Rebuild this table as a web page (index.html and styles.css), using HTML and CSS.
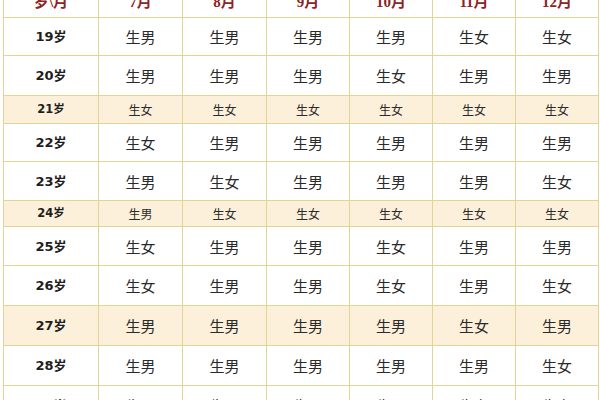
FILE: index.html
```html
<!DOCTYPE html>
<html lang="zh-CN">
<head>
<meta charset="utf-8">
<title>生男生女表</title>
<link rel="stylesheet" href="styles.css">
</head>
<body>
<table class="chart">
  <colgroup>
    <col class="c-age"><col class="c-m1"><col class="c-m1"><col class="c-m2"><col class="c-m2"><col class="c-m2"><col class="c-m2">
  </colgroup>
  <thead>
    <tr class="head"><th>岁\月</th><th>7月</th><th>8月</th><th>9月</th><th>10月</th><th>11月</th><th>12月</th></tr>
  </thead>
  <tbody>
    <tr class="r38"><td class="age">19岁</td><td>生男</td><td>生男</td><td>生男</td><td>生男</td><td>生女</td><td>生女</td></tr>
    <tr class="r40"><td class="age">20岁</td><td>生男</td><td>生男</td><td>生男</td><td>生女</td><td>生男</td><td>生男</td></tr>
    <tr class="hl r28"><td class="age">21岁</td><td>生女</td><td>生女</td><td>生女</td><td>生女</td><td>生女</td><td>生女</td></tr>
    <tr class="r38"><td class="age">22岁</td><td>生女</td><td>生男</td><td>生男</td><td>生男</td><td>生男</td><td>生男</td></tr>
    <tr class="r39"><td class="age">23岁</td><td>生男</td><td>生女</td><td>生男</td><td>生男</td><td>生男</td><td>生女</td></tr>
    <tr class="hl r26"><td class="age">24岁</td><td>生男</td><td>生女</td><td>生女</td><td>生女</td><td>生女</td><td>生女</td></tr>
    <tr class="r39"><td class="age">25岁</td><td>生女</td><td>生男</td><td>生男</td><td>生女</td><td>生男</td><td>生男</td></tr>
    <tr class="r40"><td class="age">26岁</td><td>生女</td><td>生男</td><td>生男</td><td>生女</td><td>生男</td><td>生女</td></tr>
    <tr class="hl2 r40"><td class="age">27岁</td><td>生男</td><td>生男</td><td>生男</td><td>生男</td><td>生女</td><td>生男</td></tr>
    <tr class="r40"><td class="age">28岁</td><td>生男</td><td>生男</td><td>生男</td><td>生男</td><td>生男</td><td>生女</td></tr>
    <tr class="r40"><td class="age">29岁</td><td>生男</td><td>生男</td><td>生男</td><td>生男</td><td>生女</td><td>生女</td></tr>
  </tbody>
</table>
</body>
</html>
```
FILE: styles.css
```css
html, body {
  margin: 0;
  padding: 0;
  background: #ffffff;
  overflow: hidden;
}
.chart {
  border-collapse: collapse;
  table-layout: fixed;
  width: 595px;
  margin: -18px 0 0 3px;
  font-family: "Noto Sans CJK SC", "Noto Sans", sans-serif;
  color: #2a2a2a;
}
.c-age { width: 95px; }
.c-m1 { width: 84px; }
.c-m2 { width: 83px; }
.chart th, .chart td {
  border: 1px solid #e0d592;
  text-align: center;
  vertical-align: middle;
  padding: 0;
}
.chart th {
  height: 34px;
  font-family: "Liberation Serif", "Noto Sans CJK SC", serif;
  font-size: 15px;
  font-weight: bold;
  color: #8c2424;
}
.chart td {
  font-size: 15px;
  line-height: 1;
}
.chart td.age {
  font-family: "DejaVu Sans", "Noto Sans CJK SC", sans-serif;
  font-weight: bold;
  font-size: 13px;
  color: #1e1e1e;
}
.hl td {
  background: #fcf0db;
  font-size: 12px;
}
.hl td.age {
  font-size: 11.5px;
}
.hl2 td {
  background: #fcf0db;
}
.r26 { height: 26px; }
.r28 { height: 28px; }
.r38 { height: 38px; }
.r39 { height: 39px; }
.r40 { height: 40px; }
```
